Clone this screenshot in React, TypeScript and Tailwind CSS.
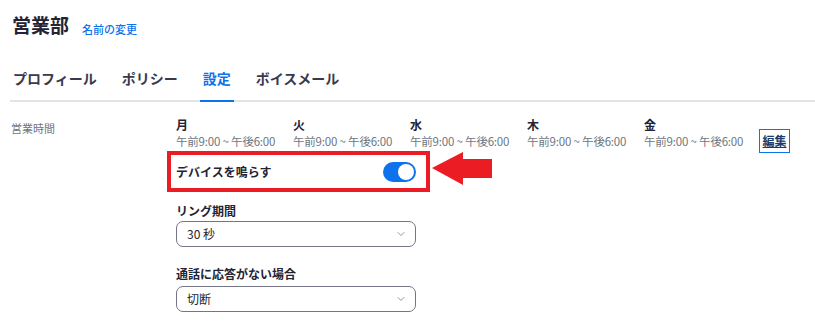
import { ChevronDown } from "lucide-react";

const DAYS = ["月", "火", "水", "木", "金"];

function Select({ value }: { value: string }) {
  return (
    <div className="flex h-[26px] w-[240px] items-center justify-between rounded-[7px] border border-[#747487] pl-[10px] pr-[8px]">
      <span className="text-[12px] text-[#232333]">{value}</span>
      <ChevronDown className="h-[12px] w-[12px] text-[#6e7680]" strokeWidth={1.5} />
    </div>
  );
}

export default function App() {
  return (
    <div
      className="h-[334px] w-[815px] overflow-hidden bg-white text-[#232333]"
      style={{ fontFamily: '"Noto Sans CJK JP", "Noto Sans", sans-serif' }}
    >
      {/* header */}
      <div className="flex items-end gap-[13px] pl-[12px] pt-[10px]">
        <h1 className="text-[19px] font-bold leading-[30px]">営業部</h1>
        <a className="mb-[3px] text-[11px] font-medium text-[#0e72ed]">名前の変更</a>
      </div>

      {/* tabs */}
      <div className="ml-[10px] mt-[28px] flex border-b-2 border-[#e1e4e8] pl-[3px]">
        {["プロフィール", "ポリシー", "設定", "ボイスメール"].map((t) => {
          const active = t === "設定";
          return (
            <div
              key={t}
              className={`relative mr-[25px] pb-[12px] text-[14px] font-bold leading-[20px] ${
                active ? "text-[#0e72ed]" : "text-[#39394d]"
              }`}
            >
              {t}
              {active && (
                <span className="absolute -bottom-[2px] -left-[3px] -right-[3px] h-[2px] bg-[#0e72ed]" />
              )}
            </div>
          );
        })}
      </div>

      {/* content */}
      <div className="mt-[14px] flex">
        <div className="w-[176px] pl-[11px] pt-[3px] text-[11px] leading-[18px] text-[#6e7680]">営業時間</div>
        <div className="flex flex-col">
          <div className="flex items-end">
            {DAYS.map((d) => (
              <div key={d} className="w-[117px]">
                <div className="text-[12px] font-bold leading-[17px]">{d}</div>
                <div className="text-[11.5px] leading-[17px] tracking-[-0.2px] text-[#6e7680]">午前9:00 ~ 午後6:00</div>
              </div>
            ))}
            <button className="mb-[-3px] ml-[-2px] flex h-[24px] w-[31px] items-center justify-center border border-[#0e72ed] text-[12px] font-bold text-[#1a3a6b] underline">
              編集
            </button>
          </div>

          {/* device ring row with annotation */}
          <div className="relative mt-[5px] flex h-[33px] w-[240px] items-center justify-between">
            <span className="text-[12px] font-bold">デバイスを鳴らす</span>
            <span className="flex h-[20px] w-[33px] items-center justify-end rounded-full bg-[#0e72ed] pr-[2px]">
              <span className="h-[16px] w-[16px] rounded-full bg-white" />
            </span>
            <div className="pointer-events-none absolute -left-[9px] -top-[4px] h-[41px] w-[263px] border-[4px] border-[#ec1c24]" />
            <svg
              className="absolute left-[256px] top-[-3px]"
              width="62"
              height="35"
              viewBox="0 0 62 35"
            >
              <polygon points="0,16 31,0 31,7 60,7 60,26 31,26 31,33" fill="#ec1c24" />
            </svg>
          </div>

          <div className="mt-[14px] text-[12px] font-bold leading-[18px]">リング期間</div>
          <div className="mt-[1px]">
            <Select value="30 秒" />
          </div>

          <div className="mt-[18px] text-[12px] font-bold leading-[18px]">通話に応答がない場合</div>
          <div className="mt-[3px]">
            <Select value="切断" />
          </div>
        </div>
      </div>
    </div>
  );
}
